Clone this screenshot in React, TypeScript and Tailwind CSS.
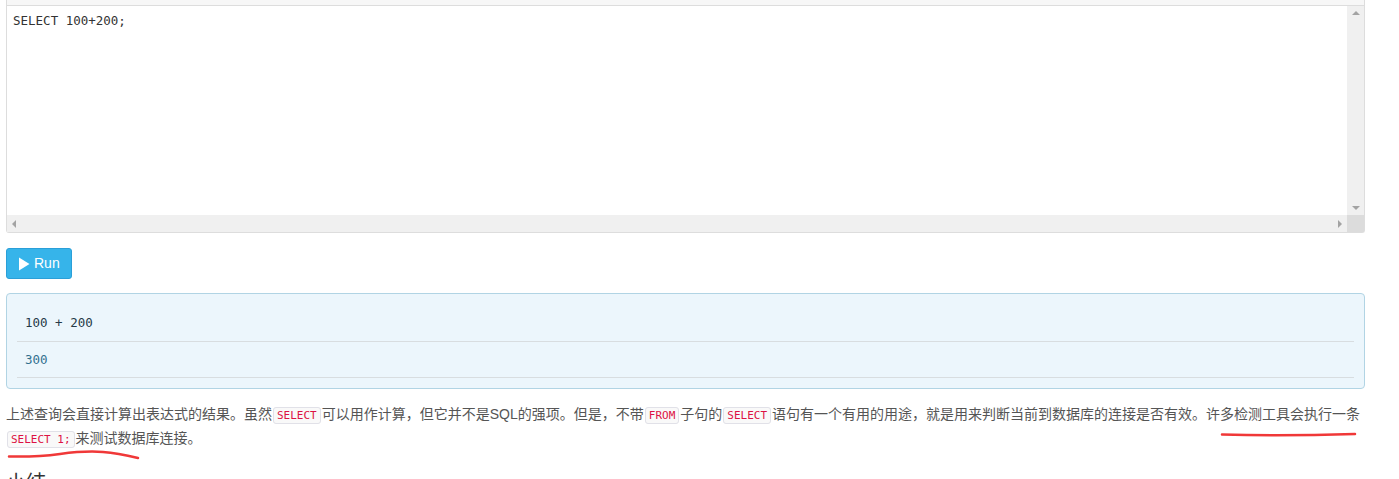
import React from 'react';

const mono = { fontFamily: '"DejaVu Sans Mono", "Liberation Mono", monospace' };

const Code: React.FC<{ children: React.ReactNode }> = ({ children }) => (
  <code
    className="mx-[1px] rounded-[3px] border border-[#e1e1e8] bg-[#f9f9f9] px-[3px] py-[1px] text-[11px] text-[#dd1144]"
    style={mono}
  >
    {children}
  </code>
);

const Editor: React.FC = () => (
  <div className="rounded-b-[3px] border-x border-b border-[#dddddd] bg-white">
    <div className="h-[6px] border-b border-[#dddddd] bg-[#f7f7f7]" />
    <div className="flex h-[209px]">
      <div className="flex-1 px-[6px] pt-[5px] text-[12.5px] leading-[20px] text-[#333]" style={mono}>
        SELECT 100+200;
      </div>
      <div className="flex w-[17px] flex-col items-center justify-between bg-[#f0f0f0] py-[5px]">
        <span className="h-0 w-0 border-x-[4px] border-b-[4px] border-x-transparent border-b-[#a3a3a3]" />
        <span className="h-0 w-0 border-x-[4px] border-t-[4px] border-x-transparent border-t-[#a3a3a3]" />
      </div>
    </div>
    <div className="flex h-[17px]">
      <div className="flex flex-1 items-center justify-between bg-[#f0f0f0] px-[5px]">
        <span className="h-0 w-0 border-y-[4px] border-r-[4px] border-y-transparent border-r-[#a3a3a3]" />
        <span className="h-0 w-0 border-y-[4px] border-l-[4px] border-y-transparent border-l-[#a3a3a3]" />
      </div>
      <div className="w-[17px] bg-[#dcdcdc]" />
    </div>
  </div>
);

export default function App() {
  return (
    <div
      className="relative w-[1365px] pl-[6px] text-[14px] text-[#555]"
      style={{ fontFamily: '"Liberation Sans", "Noto Sans CJK SC", sans-serif' }}
    >
      <Editor />

      <button className="mt-[15px] flex h-[31px] items-center gap-[4px] rounded-[3px] border border-[#2a9fd8] bg-[#36b4ea] px-[11px] text-[14px] text-white">
        <svg width="12" height="14" viewBox="0 0 12 14">
          <path d="M1 0.5 L11.5 7 L1 13.5 Z" fill="white" />
        </svg>
        Run
      </button>

      <div className="mt-[14px] rounded-[4px] border border-[#b1d4e4] bg-[#ecf6fc] px-[10px] py-[10px]">
        <div className="border-b border-[#d8dde0] px-[8px] py-[10px] text-[12.5px] leading-[17px] text-[#253a48]" style={mono}>
          100 + 200
        </div>
        <div className="border-b border-[#d8dde0] px-[8px] py-[9px] text-[12.5px] leading-[17px] text-[#31708f]" style={mono}>
          300
        </div>
      </div>

      <p className="mt-[14px] pr-[2px] leading-[22px]">
        上述查询会直接计算出表达式的结果。虽然<Code>SELECT</Code>可以用作计算，但它并不是SQL的强项。但是，不带<Code>FROM</Code>子句的<Code>SELECT</Code>语句有一个有用的用途，就是用来判断当前到数据库的连接是否有效。许多检测工具会执行一条
        <Code>SELECT 1;</Code>来测试数据库连接。
      </p>

      <h3 className="mt-[20px] text-[20px] leading-[24px] text-[#333]">小结</h3>

      <svg className="pointer-events-none absolute left-0 top-0" width="1399" height="479">
        <path
          d="M1222 434.5 C1260 435.5 1320 435 1355 434"
          stroke="#f03838"
          strokeWidth="2.5"
          fill="none"
          strokeLinecap="round"
        />
        <path
          d="M9 456.5 C30 457 45 456 60 454 C75 452 90 451 103 452 C115 453 125 455 138 458"
          stroke="#f03838"
          strokeWidth="2.5"
          fill="none"
          strokeLinecap="round"
        />
      </svg>
    </div>
  );
}
